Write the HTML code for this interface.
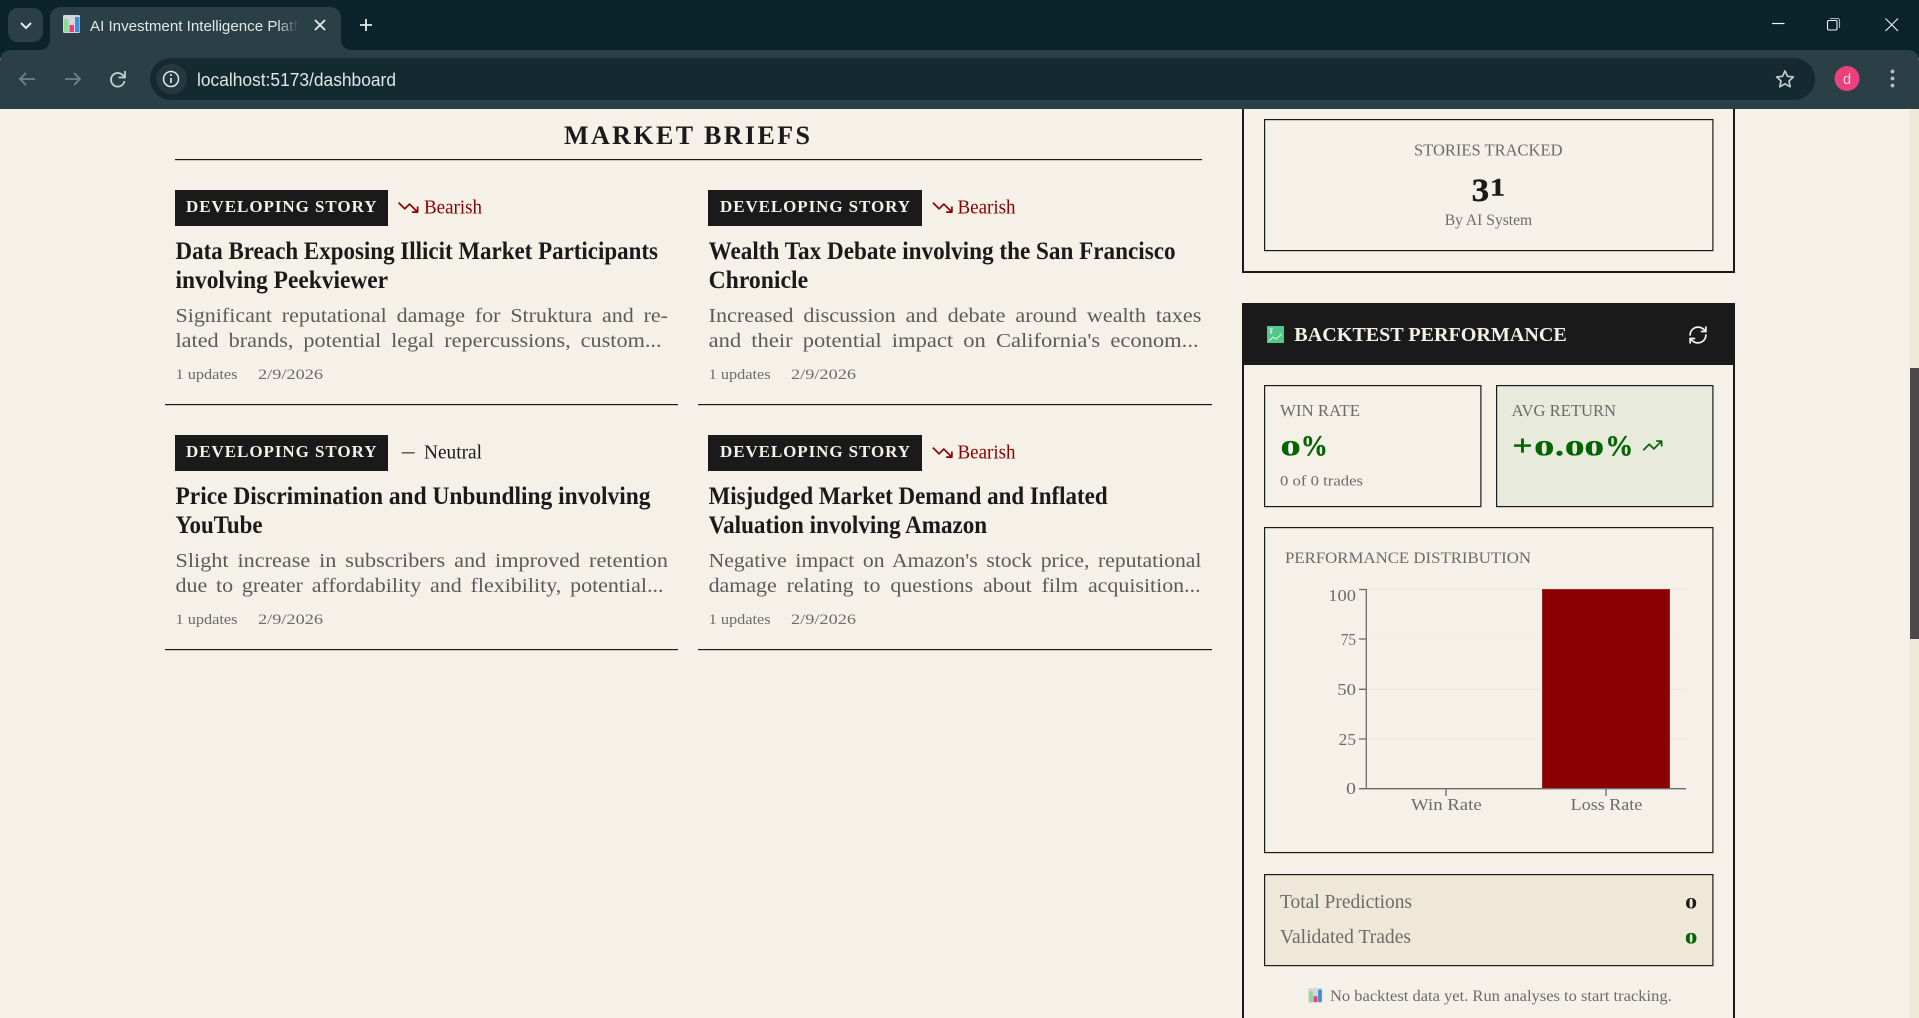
<!DOCTYPE html>
<html lang="en">
<head>
<meta charset="utf-8">
<title>AI Investment Intelligence Platform</title>
<style>
html,body{margin:0;padding:0;background:#f5f1e8;overflow:hidden;width:1919px;height:1018px}
svg{display:block}
text{font-family:"Liberation Serif",serif;white-space:pre}
.ui{font-family:"Liberation Sans",sans-serif}
.h{font-weight:bold;font-size:25px;fill:#1a1a1a}
.s{font-size:20px;fill:#5a5a5a;word-spacing:4px}
.m{font-size:15px;fill:#6b6b6b}
.tag{font-weight:bold;font-size:17px;fill:#f5f1e8}
.sent{font-size:20px}
.lab{font-size:16.5px;fill:#6b6b6b}
.ax{font-size:17px;fill:#6b6b6b}
.g{font-weight:bold;fill:#006400;stroke:#006400;stroke-width:.3px}
</style>
</head>
<body>
<svg xmlns="http://www.w3.org/2000/svg" width="1919" height="1018" viewBox="0 0 1919 1018">
<defs>
<linearGradient id="fade" x1="0" x2="1" y1="0" y2="0"><stop offset="0" stop-color="#2a3f46" stop-opacity="0"/><stop offset="1" stop-color="#2a3f46"/></linearGradient>
<g id="down"><path d="M22 17 13.500 8.500 8.500 13.500 2 7M16 17H22V11" fill="none" stroke="#8b0000" stroke-width="1.800" stroke-linejoin="round"/></g>
<g id="fav"><rect width="17" height="18" rx="1.500" fill="#d5d5e4"/><rect x="1" y="4" width="4.500" height="13" fill="#8fdc8c"/><rect x="6.500" y="10" width="4.500" height="7" fill="#ec3f78"/><rect x="12" y="2" width="4.500" height="15" fill="#3f8fd8"/></g>
</defs>

<!-- page -->
<rect width="1919" height="1018" fill="#f5f1e8"/>
<rect x="1910" y="108" width="9" height="910" fill="#ede8d8"/>
<rect x="1910" y="368" width="9" height="271" fill="#4a4a4a"/>

<!-- browser chrome -->
<rect width="1919" height="58" fill="#0b232a"/>
<path d="M0 109V62Q0 50 12 50H1907Q1919 50 1919 62V109Z" fill="#2a3f46"/>
<rect x="8" y="8" width="35" height="34" rx="10" fill="#2a3f46"/>
<path d="M21 23l5 5 5-5" fill="none" stroke="#e6ecec" stroke-width="2"/>
<path d="M38 50Q50 50 50 38V19Q50 7 62 7H329Q341 7 341 19V38Q341 50 353 50Z" fill="#2a3f46"/>
<use href="#fav" x="63" y="15"/>
<text class="ui" x="90" y="31" font-size="14.500" fill="#e2e8e9" textLength="216" lengthAdjust="spacingAndGlyphs">AI Investment Intelligence Platfo</text>
<rect x="278" y="12" width="20" height="26" fill="url(#fade)"/>
<rect x="298" y="12" width="10" height="26" fill="#2a3f46"/>
<path d="M315 20l10 10M325 20l-10 10" stroke="#e6ecec" stroke-width="1.800"/>
<path d="M366 19v12M360 25h12" stroke="#e6ecec" stroke-width="1.800"/>
<path d="M1772 23.500h12.500" stroke="#f2f5f5" stroke-width="1.200"/>
<rect x="1827.500" y="20.500" width="9.500" height="9.500" rx="1.500" fill="none" stroke="#f2f5f5" stroke-width="1.100"/>
<path d="M1830 18.500h7.500q2 0 2 2v7.500" fill="none" stroke="#aab5b8" stroke-width="1.100"/>
<path d="M1885.500 18.500l12.500 12.500M1898 18.500l-12.500 12.500" stroke="#f2f5f5" stroke-width="1.100"/>

<path d="M35 79H20M26 73l-6 6 6 6" fill="none" stroke="#70838a" stroke-width="1.800"/>
<path d="M65 79H80M74 73l6 6-6 6" fill="none" stroke="#70838a" stroke-width="1.800"/>
<path d="M124 77a6.800 6.800 0 1 0 .500 4" fill="none" stroke="#c3d0d2" stroke-width="1.800"/>
<path d="M125 71v6.500h-6.500" fill="none" stroke="#c3d0d2" stroke-width="1.800"/>
<rect x="150" y="58" width="1665" height="42" rx="21" fill="#142a31"/>
<rect x="156" y="64" width="31" height="30" rx="15" fill="#24393f"/>
<circle cx="171" cy="79" r="7.500" fill="none" stroke="#e2e8e9" stroke-width="1.500"/>
<path d="M171 78v5" stroke="#e2e8e9" stroke-width="1.700"/>
<circle cx="171" cy="75" r="1" fill="#e2e8e9"/>
<text class="ui" x="197" y="86" font-size="18" fill="#dfe6e7" textLength="199" lengthAdjust="spacingAndGlyphs">localhost:5173/dashboard</text>
<path d="M1785 71l2.500 5.300 5.800.7-4.300 4 1.200 5.800-5.200-2.900-5.200 2.900 1.200-5.800-4.300-4 5.800-.7z" fill="none" stroke="#c3cbcd" stroke-width="1.700" stroke-linejoin="round"/>
<circle cx="1847" cy="78.500" r="12.500" fill="#ec407a"/>
<text class="ui" x="1847" y="84" font-size="14.500" fill="#fbd5e3" text-anchor="middle">d</text>
<circle cx="1892.500" cy="71.500" r="1.900" fill="#b5c3c5"/><circle cx="1892.500" cy="78.500" r="1.900" fill="#b5c3c5"/><circle cx="1892.500" cy="85.500" r="1.900" fill="#b5c3c5"/>

<!-- market briefs -->
<text x="564" y="144" font-size="26" font-weight="bold" fill="#1a1a1a" textLength="246" lengthAdjust="spacing">MARKET BRIEFS</text>
<rect x="175" y="159" width="1027" height="1.200" fill="#1a1a1a"/>

<!-- card 1 -->
<g>
<rect x="175" y="190" width="213" height="36" fill="#1a1a1a"/>
<text class="tag" x="186" y="212" textLength="190.500" lengthAdjust="spacing">DEVELOPING STORY</text>
<use href="#down" transform="translate(396.700 196) scale(.95)"/>
<text class="sent" x="424" y="213.500" fill="#8b0000" textLength="58" lengthAdjust="spacingAndGlyphs">Bearish</text>
<text class="h" x="175.500" y="259" textLength="482.500" lengthAdjust="spacingAndGlyphs">Data Breach Exposing Illicit Market Participants</text>
<text class="h" x="175.500" y="288" textLength="212.500" lengthAdjust="spacingAndGlyphs">involving Peekviewer</text>
<text class="s" x="175.500" y="322" textLength="492.500" lengthAdjust="spacingAndGlyphs">Significant reputational damage for Struktura and re-</text>
<text class="s" x="175.500" y="347" textLength="486" lengthAdjust="spacingAndGlyphs">lated brands, potential legal repercussions, custom...</text>
<text class="m" x="175.500" y="379" textLength="62" lengthAdjust="spacingAndGlyphs">1 updates</text>
<text class="m" x="258" y="379" textLength="65" lengthAdjust="spacingAndGlyphs">2/9/2026</text>
<rect x="165" y="404" width="513" height="1.200" fill="#1a1a1a"/>
</g>

<!-- card 2 -->
<g>
<rect x="708" y="190" width="214" height="36" fill="#1a1a1a"/>
<text class="tag" x="720" y="212" textLength="190" lengthAdjust="spacing">DEVELOPING STORY</text>
<use href="#down" transform="translate(931 196) scale(.95)"/>
<text class="sent" x="957.500" y="213.500" fill="#8b0000" textLength="58" lengthAdjust="spacingAndGlyphs">Bearish</text>
<text class="h" x="708.600" y="259" textLength="467" lengthAdjust="spacingAndGlyphs">Wealth Tax Debate involving the San Francisco</text>
<text class="h" x="708.600" y="288" textLength="99.500" lengthAdjust="spacingAndGlyphs">Chronicle</text>
<text class="s" x="708.600" y="322" textLength="492.800" lengthAdjust="spacingAndGlyphs">Increased discussion and debate around wealth taxes</text>
<text class="s" x="708.600" y="347" textLength="490" lengthAdjust="spacingAndGlyphs">and their potential impact on California's econom...</text>
<text class="m" x="708.600" y="379" textLength="62" lengthAdjust="spacingAndGlyphs">1 updates</text>
<text class="m" x="791" y="379" textLength="65" lengthAdjust="spacingAndGlyphs">2/9/2026</text>
<rect x="698" y="404" width="514" height="1.200" fill="#1a1a1a"/>
</g>

<!-- card 3 -->
<g>
<rect x="175" y="435" width="213" height="36" fill="#1a1a1a"/>
<text class="tag" x="186" y="457" textLength="190.500" lengthAdjust="spacing">DEVELOPING STORY</text>
<rect x="401.700" y="452" width="13" height="1.600" fill="#666"/>
<text class="sent" x="424" y="458.500" fill="#1a1a1a" textLength="58" lengthAdjust="spacingAndGlyphs">Neutral</text>
<text class="h" x="175.500" y="504" textLength="475" lengthAdjust="spacingAndGlyphs">Price Discrimination and Unbundling involving</text>
<text class="h" x="175.500" y="533" textLength="87" lengthAdjust="spacingAndGlyphs">YouTube</text>
<text class="s" x="175.500" y="567" textLength="492.500" lengthAdjust="spacingAndGlyphs" style="word-spacing:3px">Slight increase in subscribers and improved retention</text>
<text class="s" x="175.500" y="592" textLength="488" lengthAdjust="spacingAndGlyphs" style="word-spacing:3px">due to greater affordability and flexibility, potential...</text>
<text class="m" x="175.500" y="624" textLength="62" lengthAdjust="spacingAndGlyphs">1 updates</text>
<text class="m" x="258" y="624" textLength="65" lengthAdjust="spacingAndGlyphs">2/9/2026</text>
<rect x="165" y="649" width="513" height="1.200" fill="#1a1a1a"/>
</g>

<!-- card 4 -->
<g>
<rect x="708" y="435" width="214" height="36" fill="#1a1a1a"/>
<text class="tag" x="720" y="457" textLength="190" lengthAdjust="spacing">DEVELOPING STORY</text>
<use href="#down" transform="translate(931 441) scale(.95)"/>
<text class="sent" x="957.500" y="458.500" fill="#8b0000" textLength="58" lengthAdjust="spacingAndGlyphs">Bearish</text>
<text class="h" x="708.600" y="504" textLength="399" lengthAdjust="spacingAndGlyphs">Misjudged Market Demand and Inflated</text>
<text class="h" x="708.600" y="533" textLength="278.500" lengthAdjust="spacingAndGlyphs">Valuation involving Amazon</text>
<text class="s" x="708.600" y="567" textLength="492.800" lengthAdjust="spacingAndGlyphs" style="word-spacing:3px">Negative impact on Amazon's stock price, reputational</text>
<text class="s" x="708.600" y="592" textLength="492" lengthAdjust="spacingAndGlyphs">damage relating to questions about film acquisition...</text>
<text class="m" x="708.600" y="624" textLength="62" lengthAdjust="spacingAndGlyphs">1 updates</text>
<text class="m" x="791" y="624" textLength="65" lengthAdjust="spacingAndGlyphs">2/9/2026</text>
<rect x="698" y="649" width="514" height="1.200" fill="#1a1a1a"/>
</g>

<!-- stories panel -->
<path d="M1243 109V272H1734V109" fill="none" stroke="#1a1a1a" stroke-width="2"/>
<rect x="1264.600" y="119.600" width="448.300" height="131" fill="none" stroke="#1a1a1a" stroke-width="1.200"/>
<text class="lab" x="1414" y="155.300" textLength="148.500" lengthAdjust="spacingAndGlyphs">STORIES TRACKED</text>
<text x="1471.700" y="201" font-size="33" font-weight="bold" fill="#1a1a1a" stroke="#1a1a1a" stroke-width=".4" textLength="17.500" lengthAdjust="spacingAndGlyphs">3</text>
<text x="1490" y="195.500" font-size="25" font-weight="bold" fill="#1a1a1a" stroke="#1a1a1a" stroke-width=".4" textLength="15" lengthAdjust="spacingAndGlyphs">1</text>
<text class="m" x="1444.700" y="225" style="font-size:16px" textLength="87.500" lengthAdjust="spacingAndGlyphs">By AI System</text>

<!-- backtest panel -->
<rect x="1242" y="303" width="493" height="62" fill="#1a1a1a"/>
<path d="M1243 365V1018M1734 365V1018" stroke="#1a1a1a" stroke-width="2"/>
<rect x="1267" y="326" width="17" height="17" fill="#52c98c"/>
<path d="M1269 341l4-4 3 2 6-5" fill="none" stroke="#e6f7ec" stroke-width="1"/>
<path d="M1269.500 328l1.500 2 1.500-2M1271 330v4M1269.500 332h3" fill="none" stroke="#f2fbf5" stroke-width=".8"/>
<text x="1294.300" y="341" font-size="20" font-weight="bold" fill="#f5f1e8" textLength="272.500" lengthAdjust="spacingAndGlyphs">BACKTEST PERFORMANCE</text>
<g transform="translate(1687.500 324.500) scale(.875)" fill="none" stroke="#f5f1e8" stroke-width="2" stroke-linecap="round" stroke-linejoin="round"><path d="M3 12a9 9 0 0 1 9-9 9.750 9.750 0 0 1 6.740 2.740L21 8"/><path d="M21 3v5h-5"/><path d="M21 12a9 9 0 0 1-9 9 9.750 9.750 0 0 1-6.740-2.740L3 16"/><path d="M8 16H3v5"/></g>

<!-- win rate -->
<rect x="1264.600" y="385.600" width="216.300" height="121" fill="none" stroke="#1a1a1a" stroke-width="1.200"/>
<text class="lab" x="1280" y="416" textLength="80" lengthAdjust="spacingAndGlyphs">WIN RATE</text>
<text class="g" x="1280.700" y="455.700" font-size="22" textLength="20" lengthAdjust="spacingAndGlyphs">0</text>
<text class="g" x="1300.700" y="455.700" font-size="30" textLength="27" lengthAdjust="spacingAndGlyphs">%</text>
<text class="m" x="1280" y="485.700" textLength="83" lengthAdjust="spacingAndGlyphs">0 of 0 trades</text>

<!-- avg return -->
<rect x="1496.600" y="385.600" width="216.300" height="121" fill="#e8eadc" stroke="#1a1a1a" stroke-width="1.200"/>
<text class="lab" x="1511.700" y="416" textLength="104.300" lengthAdjust="spacingAndGlyphs">AVG RETURN</text>
<text class="g" x="1512.300" y="455.700" font-size="30" textLength="20.400" lengthAdjust="spacingAndGlyphs">+</text>
<text class="g" x="1534.300" y="455.700" font-size="22" textLength="20" lengthAdjust="spacingAndGlyphs">0</text>
<text class="g" x="1555" y="455.700" font-size="30" textLength="9" lengthAdjust="spacingAndGlyphs">.</text>
<text class="g" x="1565" y="455.700" font-size="22" textLength="39" lengthAdjust="spacingAndGlyphs">00</text>
<text class="g" x="1605.200" y="455.700" font-size="30" textLength="28" lengthAdjust="spacingAndGlyphs">%</text>
<g transform="translate(1641.400 434.600) scale(.92)" fill="none" stroke="#006400" stroke-width="1.800" stroke-linejoin="round"><path d="M22 7 13.500 15.500 8.500 10.500 2 17M16 7H22V13"/></g>

<!-- performance distribution -->
<rect x="1264.600" y="527.600" width="448.300" height="325" fill="none" stroke="#1a1a1a" stroke-width="1.200"/>
<text class="lab" x="1285" y="563" style="font-size:15.500px" textLength="246" lengthAdjust="spacingAndGlyphs">PERFORMANCE DISTRIBUTION</text>
<path d="M1366 589H1686M1366 689.300H1686M1366 739H1686" stroke="#ede8d8" stroke-width="1"/>
<path d="M1366 639H1686" stroke="#f2eee2" stroke-width="1"/>
<rect x="1542.500" y="589.500" width="127" height="199" fill="#8b0000" stroke="#9c2222" stroke-width="1"/>
<path d="M1366.300 589V789M1359 589.500h8M1359 639h7M1359 689.300h7M1359 739h7M1359 788.700h327M1446 789v7M1606 789v7" fill="none" stroke="#6b6b6b" stroke-width="1.300"/>
<text class="ax" x="1328.300" y="601" textLength="27.700" lengthAdjust="spacingAndGlyphs">100</text>
<text class="ax" x="1340.700" y="645" textLength="15.300" lengthAdjust="spacingAndGlyphs">75</text>
<text class="ax" x="1337.300" y="695" textLength="18.700" lengthAdjust="spacingAndGlyphs">50</text>
<text class="ax" x="1338.700" y="745" textLength="17.300" lengthAdjust="spacingAndGlyphs">25</text>
<text class="ax" x="1346" y="794" textLength="10" lengthAdjust="spacingAndGlyphs">0</text>
<text class="ax" x="1411" y="810" textLength="70.700" lengthAdjust="spacingAndGlyphs">Win Rate</text>
<text class="ax" x="1570.700" y="810" textLength="71.600" lengthAdjust="spacingAndGlyphs">Loss Rate</text>

<!-- totals -->
<rect x="1264.600" y="874.600" width="448.300" height="91" fill="#efe8d8" stroke="#1a1a1a" stroke-width="1.200"/>
<text x="1280" y="908" font-size="19.500" fill="#6b6b6b" textLength="132" lengthAdjust="spacingAndGlyphs">Total Predictions</text>
<text x="1280" y="943" font-size="19.500" fill="#6b6b6b" textLength="131" lengthAdjust="spacingAndGlyphs">Validated Trades</text>
<text x="1685.200" y="908.300" font-size="16" font-weight="bold" fill="#1a1a1a" textLength="12" lengthAdjust="spacingAndGlyphs">0</text>
<text class="g" x="1685.200" y="943.300" font-size="16" textLength="12" lengthAdjust="spacingAndGlyphs">0</text>

<use href="#fav" transform="translate(1308.300 988) scale(.82)"/>
<text class="m" x="1330" y="1001" style="font-size:16px" textLength="341.700" lengthAdjust="spacingAndGlyphs">No backtest data yet. Run analyses to start tracking.</text>
</svg>
</body>
</html>
